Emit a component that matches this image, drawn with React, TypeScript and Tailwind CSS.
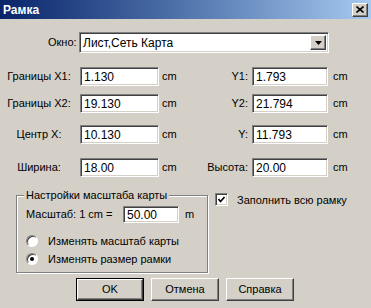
const font = "font-['Liberation_Sans',Arial,sans-serif]";

const sunken =
  "border border-t-[#808080] border-l-[#808080] border-b-white border-r-white shadow-[inset_1px_1px_0_#404040,inset_-1px_-1px_0_#d4d0c8] bg-white";

const raised =
  "border border-t-white border-l-white border-b-[#404040] border-r-[#404040] shadow-[inset_-1px_-1px_0_#808080] bg-[#d4d0c8]";

const Field = ({ value, w }: { value: string; w: string }) => (
  <div className={`${sunken} ${w} h-full flex items-center pl-[3px] text-[12px] text-black leading-none`}>
    {value}
  </div>
);

const Row = ({
  l1,
  v1,
  l2,
  v2,
  mt,
}: {
  l1: string;
  v1: string;
  l2: string;
  v2: string;
  mt: string;
}) => (
  <div className={`flex items-center h-[19px] ${mt}`}>
    <div className="w-[78px] text-center">{l1}</div>
    <div className="ml-[2px] h-full">
      <Field value={v1} w="w-[79px]" />
    </div>
    <div className="ml-[3px] w-[28px]">cm</div>
    <div className="w-[58px] text-right">{l2}</div>
    <div className="ml-[4px] h-full">
      <Field value={v2} w="w-[76px]" />
    </div>
    <div className="ml-[5px]">cm</div>
  </div>
);

const Radio = ({ checked, label }: { checked?: boolean; label: string }) => (
  <div className="flex items-center h-[18px]">
    <div className="w-[12px] h-[12px] rounded-full border border-t-[#808080] border-l-[#808080] border-b-white border-r-white shadow-[inset_1px_1px_0_#404040] bg-white flex items-center justify-center">
      {checked && <div className="w-[4px] h-[4px] rounded-full bg-black" />}
    </div>
    <span className="ml-[10px]">{label}</span>
  </div>
);

const Button = ({ label, def }: { label: string; def?: boolean }) => (
  <div className={`w-[68px] h-[23px] ${def ? "border border-black" : ""}`}>
    <div className={`${raised} w-full h-full flex items-center justify-center`}>
      {label}
    </div>
  </div>
);

export default function App() {
  return (
    <div className={`${font} w-[371px] h-[308px] bg-[#d4d0c8] text-[11px] text-black leading-none overflow-hidden`}>
      <div className="h-[19px] bg-gradient-to-r from-[#0a246a] to-[#a6caf0] flex items-center justify-between pl-[3px] pr-[3px]">
        <span className="text-white font-bold text-[12px]">Рамка</span>
        <div className={`${raised} w-[16px] h-[14px] flex items-center justify-center`}>
          <svg width="8" height="7" viewBox="0 0 8 7">
            <path d="M0.5 0.5 L7.5 6.5 M7.5 0.5 L0.5 6.5" stroke="black" strokeWidth="1.6" />
          </svg>
        </div>
      </div>

      <div className="flex items-center mt-[13px] h-[21px] pl-[48px]">
        <div className="w-[31px]">Окно:</div>
        <div className={`${sunken} w-[250px] h-full flex items-center justify-between pl-[3px] pr-[2px] text-[12px]`}>
          <span>Лист,Сеть Карта</span>
          <div className={`${raised} w-[16px] h-[15px] flex items-center justify-center`}>
            <svg width="7" height="4" viewBox="0 0 7 4">
              <path d="M0 0 H7 L3.5 4 Z" fill="black" />
            </svg>
          </div>
        </div>
      </div>

      <Row mt="mt-[14px]" l1="Границы X1:" v1="1.130" l2="Y1:" v2="1.793" />
      <Row mt="mt-[8px]" l1="Границы X2:" v1="19.130" l2="Y2:" v2="21.794" />
      <Row mt="mt-[12px]" l1="Центр X:" v1="10.130" l2="Y:" v2="11.793" />
      <Row mt="mt-[14px]" l1="Ширина:" v1="18.00" l2="Высота:" v2="20.00" />

      <div className="flex mt-[16px] pl-[16px]">
        <div className="relative w-[192px] h-[78px] mt-[2px] border border-[#808080] shadow-[1px_1px_0_white,inset_1px_1px_0_white]">
          <div className="absolute -top-[6px] left-[7px] px-[2px] bg-[#d4d0c8]">Настройки масштаба карты</div>
          <div className="flex items-center h-[17px] mt-[10px] pl-[9px]">
            <div className="w-[97px]">Масштаб: 1 cm =</div>
            <div className="h-full">
              <Field value="50.00" w="w-[56px]" />
            </div>
            <div className="ml-[6px]">m</div>
          </div>
          <div className="mt-[9px] pl-[9px]">
            <Radio label="Изменять масштаб карты" />
            <Radio checked label="Изменять размер рамки" />
          </div>
        </div>
        <div className="flex items-start ml-[7px]">
          <div className={`${sunken} w-[13px] h-[13px] flex items-center justify-center`}>
            <svg width="7" height="7" viewBox="0 0 7 7">
              <path d="M0.5 3 L2.5 5.5 L6.5 1" stroke="black" strokeWidth="1.6" fill="none" />
            </svg>
          </div>
          <span className="ml-[9px] mt-[2px]">Заполнить всю рамку</span>
        </div>
      </div>

      <div className="flex gap-[7px] mt-[5px] pl-[76px]">
        <Button def label="OK" />
        <Button label="Отмена" />
        <Button label="Справка" />
      </div>
    </div>
  );
}
